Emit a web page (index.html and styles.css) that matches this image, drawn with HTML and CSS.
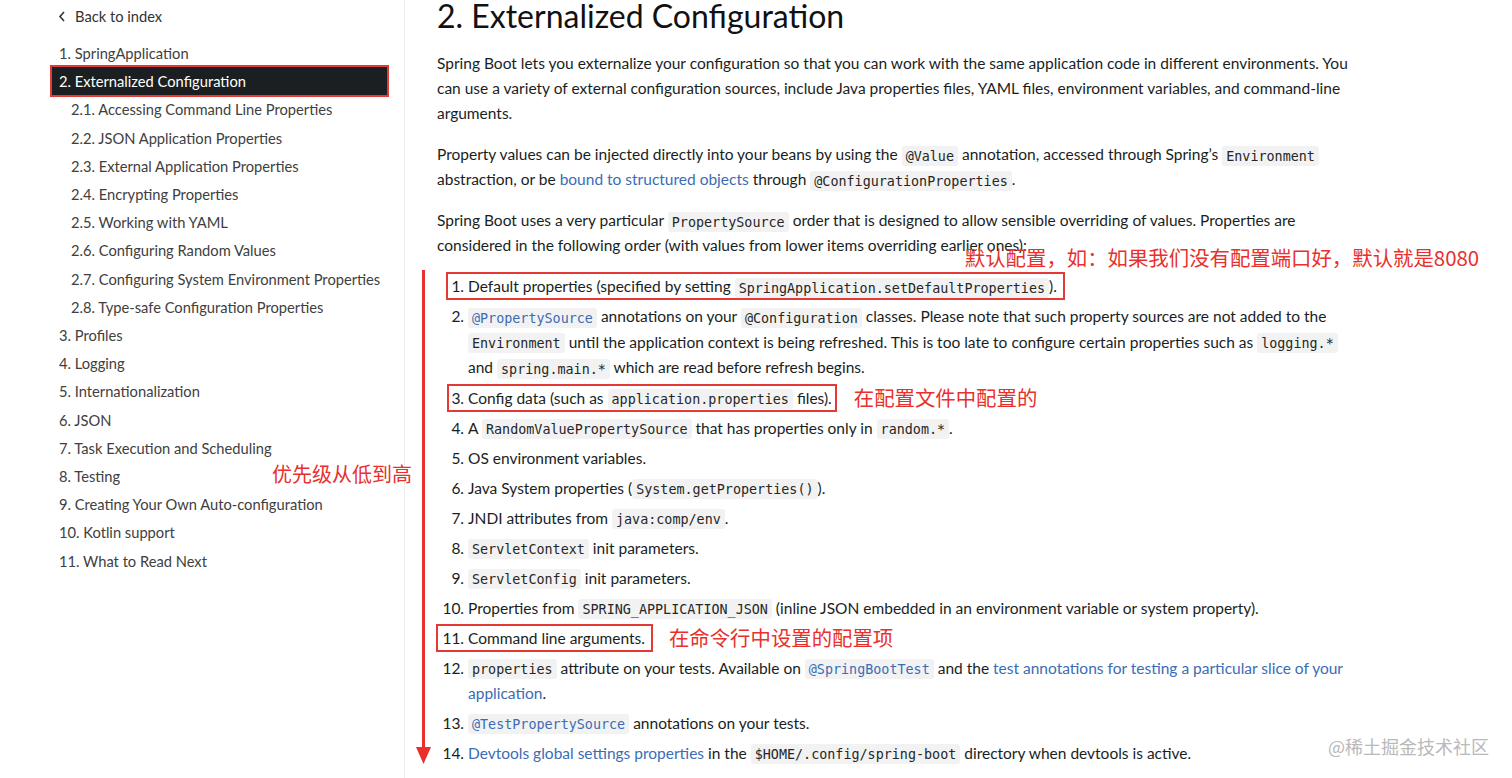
FILE: index.html
```html
<!DOCTYPE html>
<html lang="en">
<head>
    <meta charset="UTF-8">
    <meta name="viewport" content="width=device-width, initial-scale=1.0">
    <title>Externalized Configuration</title>
    <link rel="stylesheet" href="styles.css">
</head>
<body>
<div class="page">
    <aside class="sidebar">
        <a href="#" class="back">
            <svg width="8" height="11" viewBox="0 0 8 11"><polyline points="6,1 2,5.5 6,10" fill="none" stroke="#333" stroke-width="1.6"/></svg>
            Back to index
        </a>
        <ul class="toc">
            <li><a href="#">1. SpringApplication</a></li>
            <li><a href="#" class="active">2. Externalized Configuration</a></li>
            <li class="sub"><a href="#">2.1. Accessing Command Line Properties</a></li>
            <li class="sub"><a href="#">2.2. JSON Application Properties</a></li>
            <li class="sub"><a href="#">2.3. External Application Properties</a></li>
            <li class="sub"><a href="#">2.4. Encrypting Properties</a></li>
            <li class="sub"><a href="#">2.5. Working with YAML</a></li>
            <li class="sub"><a href="#">2.6. Configuring Random Values</a></li>
            <li class="sub"><a href="#">2.7. Configuring System Environment Properties</a></li>
            <li class="sub"><a href="#">2.8. Type-safe Configuration Properties</a></li>
            <li><a href="#">3. Profiles</a></li>
            <li><a href="#">4. Logging</a></li>
            <li><a href="#">5. Internationalization</a></li>
            <li><a href="#">6. JSON</a></li>
            <li><a href="#">7. Task Execution and Scheduling</a></li>
            <li><a href="#">8. Testing</a></li>
            <li><a href="#">9. Creating Your Own Auto-configuration</a></li>
            <li><a href="#">10. Kotlin support</a></li>
            <li><a href="#">11. What to Read Next</a></li>
        </ul>
    </aside>

    <main class="content">
        <h1>2. Externalized Configuration</h1>
        <p>Spring Boot lets you externalize your configuration so that you can work with the same application code in different environments. You can use a variety of external configuration sources, include Java properties files, YAML files, environment variables, and command-line arguments.</p>
        <p>Property values can be injected directly into your beans by using the <code>@Value</code> annotation, accessed through Spring’s <code>Environment</code> abstraction, or be <a href="#">bound to structured objects</a> through <code>@ConfigurationProperties</code>.</p>
        <p>Spring Boot uses a very particular <code>PropertySource</code> order that is designed to allow sensible overriding of values. Properties are considered in the following order (with values from lower items overriding earlier ones):</p>
        <ol class="order">
            <li><span class="hl hl-1">Default properties (specified by setting <code>SpringApplication.setDefaultProperties</code>).<span class="note note-top">默认配置，如：如果我们没有配置端口好，默认就是8080</span></span></li>
            <li class="tall"><a href="#"><code>@PropertySource</code></a> annotations on your <code>@Configuration</code> classes. Please note that such property sources are not added to the <code>Environment</code> until the application context is being refreshed. This is too late to configure certain properties such as <code>logging.*</code> and <code>spring.main.*</code> which are read before refresh begins.</li>
            <li><span class="hl hl-3">Config data (such as <code>application.properties</code> files).<span class="note note-side">在配置文件中配置的</span></span></li>
            <li>A <code>RandomValuePropertySource</code> that has properties only in <code>random.*</code>.</li>
            <li>OS environment variables.</li>
            <li>Java System properties (<code>System.getProperties()</code>).</li>
            <li>JNDI attributes from <code>java:comp/env</code>.</li>
            <li><code>ServletContext</code> init parameters.</li>
            <li><code>ServletConfig</code> init parameters.</li>
            <li>Properties from <code>SPRING_APPLICATION_JSON</code> (inline JSON embedded in an environment variable or system property).</li>
            <li><span class="hl hl-11">Command line arguments.<span class="note note-side2">在命令行中设置的配置项</span></span></li>
            <li><code>properties</code> attribute on your tests. Available on <a href="#"><code>@SpringBootTest</code></a> and the <a href="#">test annotations for testing a particular slice of your application</a>.</li>
            <li><a href="#"><code>@TestPropertySource</code></a> annotations on your tests.</li>
            <li><a href="#">Devtools global settings properties</a> in the <code>$HOME/.config/spring-boot</code> directory when devtools is active.</li>
        </ol>
    </main>

    <!-- hand-drawn annotations on top of the page -->
    <svg class="arrow" width="16" height="496" viewBox="0 0 16 496">
        <rect x="6" y="0" width="3" height="480" fill="#e8302c"/>
        <polygon points="0,477 15,477 7.5,494" fill="#e8302c"/>
    </svg>
    <div class="note note-arrow">优先级从低到高</div>
    <div class="watermark">@稀土掘金技术社区</div>
</div>
</body>
</html>
```

FILE: styles.css
```css
body {
    margin: 0;
    font-family: Lato, "Liberation Sans", sans-serif;
    font-size: 15.5px;
    color: #191e1e;
    background: #fff;
    overflow: hidden;
}
.page {
    display: flex;
    position: relative;
    min-height: 100vh;
}
.sidebar {
    width: 405px;
    flex: none;
    box-sizing: border-box;
    border-right: 1px solid #ececec;
    padding: 2px 17px 0 52px;
    font-size: 14.7px;
}
.back {
    display: flex;
    align-items: center;
    gap: 9px;
    padding-left: 6px;
    line-height: 28px;
    color: #333;
    text-decoration: none;
}
.toc {
    list-style: none;
    margin: 9px 0 0;
    padding: 0;
}
.toc a {
    display: block;
    line-height: 28.2px;
    padding-left: 7px;
    color: #404040;
    text-decoration: none;
    white-space: nowrap;
}
.toc .sub a {
    padding-left: 19px;
}
.toc a.active {
    background: #1b1f21;
    color: #fff;
    outline: 2px solid #e53935;
}
.content {
    flex: none;
    width: 920px;
    padding-left: 32px;
}
h1 {
    font-size: 32px;
    line-height: 32px;
    font-weight: 400;
    color: #111;
    margin: 0 0 19px;
}
p {
    margin: 0 0 16px;
    line-height: 25px;
}
a {
    color: #3b6cb5;
    text-decoration: none;
}
code {
    font-family: "DejaVu Sans Mono", "Liberation Mono", monospace;
    font-size: 13.4px;
    line-height: 1;
    background: #f2f2f2;
    color: #262626;
    padding: 2.5px 4px;
    border-radius: 3px;
}
a code {
    color: inherit;
}
.order {
    margin: 16px 0 0;
    padding-left: 31px;
    line-height: 25px;
}
.order li {
    margin-bottom: 5px;
}
.order li.tall {
    line-height: 25.5px;
}
.hl {
    position: relative;
}
.hl::after {
    content: "";
    position: absolute;
    top: -5px;
    bottom: -5px;
    left: -22px;
    right: -8px;
    border: 2px solid #e53935;
}
.hl-3::after {
    left: -21px;
    right: -5px;
}
.hl-11::after {
    left: -32px;
}
.note {
    position: absolute;
    font-family: "Noto Sans CJK SC", sans-serif;
    font-size: 20.4px;
    line-height: 24px;
    color: #e8302c;
    white-space: nowrap;
}
.note-top {
    left: calc(100% - 92px);
    top: -32px;
}
.note-side {
    left: calc(100% + 22px);
    top: -4px;
}
.note-side2 {
    left: calc(100% + 24px);
    top: -4px;
}
.arrow {
    position: absolute;
    left: 416px;
    top: 270px;
}
.note-arrow {
    left: 272px;
    top: 462px;
    font-size: 20px;
}
.watermark {
    position: absolute;
    left: 1328px;
    top: 734px;
    font-family: "Noto Sans CJK SC", sans-serif;
    font-size: 18px;
    line-height: 24px;
    color: #b9b9b9;
}
```
